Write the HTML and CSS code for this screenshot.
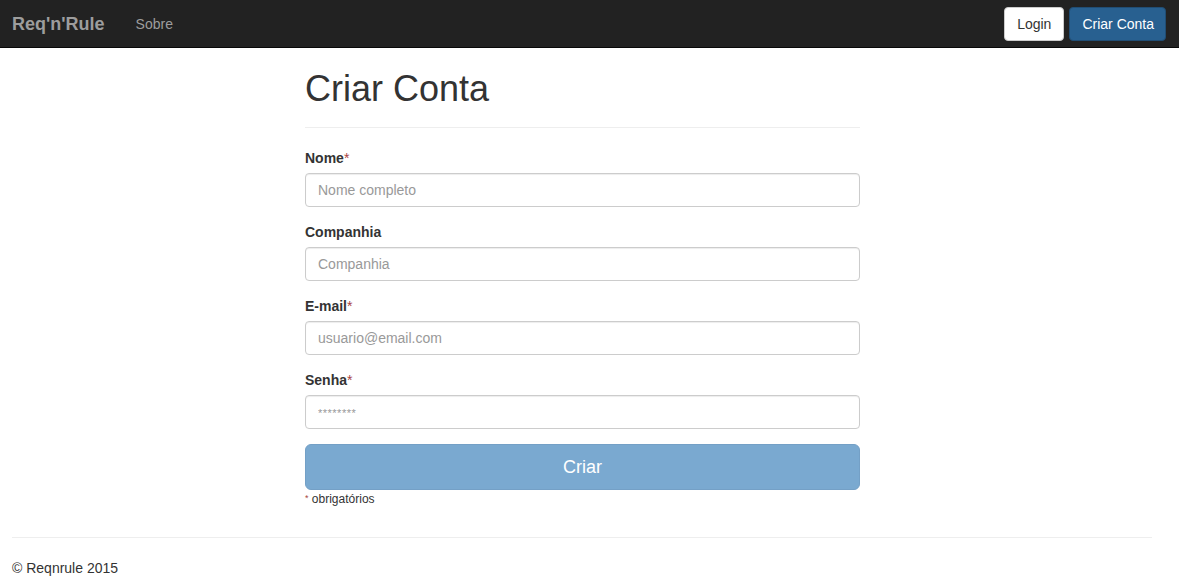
FILE: index.html
```html
<!DOCTYPE html>
<html lang="pt">
<head>
<meta charset="utf-8">
<title>Criar Conta - Req'n'Rule</title>
<link rel="stylesheet" href="styles.css">
</head>
<body>
<nav class="navbar">
  <div class="nav-left">
    <a class="brand" href="#">Req'n'Rule</a>
    <a class="nav-link" href="#">Sobre</a>
  </div>
  <div class="nav-right">
    <a class="btn btn-default" href="#">Login</a>
    <a class="btn btn-primary" href="#">Criar Conta</a>
  </div>
</nav>
<main class="main">
  <div class="page-header"><h1>Criar Conta</h1></div>
  <form class="form">
    <div class="form-group">
      <label>Nome<span class="req">*</span></label>
      <input class="form-control" type="text" placeholder="Nome completo">
    </div>
    <div class="form-group">
      <label>Companhia</label>
      <input class="form-control" type="text" placeholder="Companhia">
    </div>
    <div class="form-group">
      <label>E-mail<span class="req">*</span></label>
      <input class="form-control" type="email" placeholder="usuario@email.com">
    </div>
    <div class="form-group">
      <label>Senha<span class="req">*</span></label>
      <input class="form-control pw" type="password" placeholder="********">
    </div>
    <button class="btn-submit" type="button" disabled>Criar</button>
    <div class="note"><span class="req">*</span> obrigatórios</div>
  </form>
</main>
<footer class="footer">
  <hr class="rule">
  <p>© Reqnrule 2015</p>
</footer>
</body>
</html>
```
FILE: styles.css
```css
* { box-sizing: border-box; }
html, body { margin: 0; padding: 0; }
body {
  font-family: "Liberation Sans", Arial, sans-serif;
  font-size: 14px;
  line-height: 20px;
  color: #333;
  background: #fff;
}
a { text-decoration: none; }

.navbar {
  height: 48px;
  background: #222;
  border-bottom: 1px solid #080808;
  display: flex;
  justify-content: space-between;
  align-items: center;
  padding: 0 13px 0 12px;
}
.nav-left { display: flex; align-items: center; gap: 31px; }
.brand {
  color: #9d9d9d;
  font-weight: bold;
  font-size: 18px;
  line-height: 20px;
}
.nav-link { color: #9d9d9d; font-size: 14px; }
.nav-right { display: flex; gap: 5px; align-items: center; }
.btn {
  display: inline-block;
  height: 34px;
  line-height: 20px;
  padding: 6px 12px;
  border: 1px solid transparent;
  border-radius: 4px;
  font-size: 14px;
}
.btn-default { background: #fff; color: #333; border-color: #ccc; }
.btn-primary { background: #286090; color: #fff; border-color: #204d74; padding: 6px 11px 6px 12px; }

.main {
  width: 555px;
  margin-left: 305px;
}
.page-header {
  margin: 21px 0 20px;
  padding-bottom: 18px;
  border-bottom: 1px solid #eee;
}
.page-header h1 {
  margin: 0;
  font-size: 36px;
  line-height: 40px;
  font-weight: 500;
  color: #333;
}
.form { margin: 0; }
.form-group { margin-bottom: 15px; }
.form-group label {
  display: block;
  font-weight: bold;
  margin-bottom: 5px;
}
.req { color: #a94442; font-weight: normal; }
.form-control {
  display: block;
  width: 100%;
  height: 34px;
  padding: 6px 12px;
  font-family: inherit;
  font-size: 14px;
  color: #555;
  border: 1px solid #ccc;
  border-radius: 4px;
  box-shadow: inset 0 1px 1px rgba(0,0,0,.075);
  background: #fff;
  outline: none;
}
.form-control::placeholder { color: #999; }
.pw::placeholder { font-size: 11px; letter-spacing: 0.5px; }
.btn-submit {
  display: block;
  width: 100%;
  height: 46px;
  font-family: inherit;
  font-size: 18px;
  color: #fff;
  background: #7aa9d0;
  border: 1px solid #74a0c6;
  border-radius: 6px;
  cursor: not-allowed;
}
.note {
  font-size: 12px;
  line-height: 16px;
  margin-top: 0;
}
.note .req { font-size: 9px; vertical-align: 2px; }

.footer {
  width: 1140px;
  margin-left: 12px;
}
.rule {
  margin: 30px 0 20px;
  border: 0;
  border-top: 1px solid #eee;
  height: 0;
}
.footer p { margin: 0; }
```
